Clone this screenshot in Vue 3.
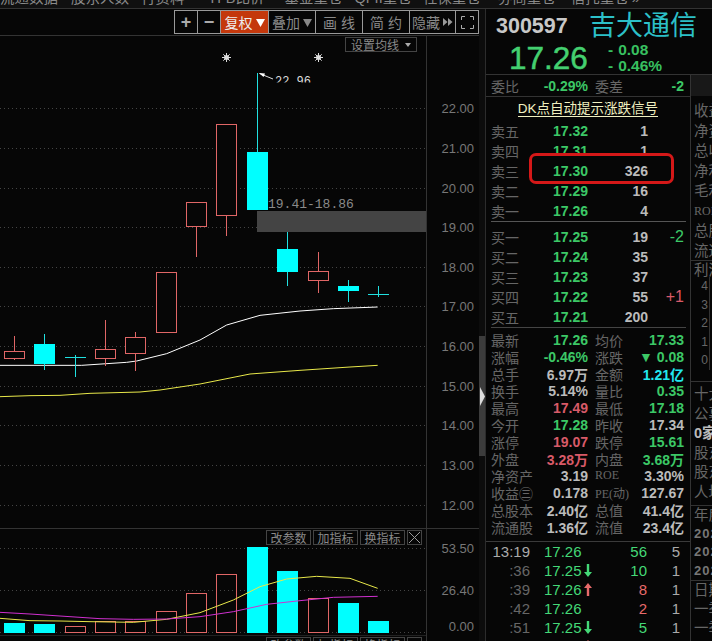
<script setup>
const menuItems = [
  { text: '流通数据', gap: 0 },
  { text: '股东人数', gap: 13 },
  { text: '行资料', gap: 12 },
  { text: 'H·B比价', gap: 26 },
  { text: '基金重仓', gap: 20 },
  { text: 'QFII重仓', gap: 12 },
  { text: '社保重仓', gap: 11 },
  { text: '券商重仓', gap: 17 },
  { text: '信托重仓', gap: 15 },
  { text: '»', gap: 3 },
];

const tools = [
  { text: '+', width: 23, cls: 'sym' },
  { text: '−', width: 23, cls: 'sym' },
  { text: '复权', width: 48, cls: 'active', tri: '#fff' },
  { text: '叠加', width: 47, tri: '#888' },
  { text: '画 线', width: 47 },
  { text: '简 约', width: 47 },
  { text: '隐藏', width: 46, more: true },
];

const grid = [
  [22, 108.5], [21, 148.5], [20, 188.5], [19, 227.5], [18, 267.5], [17, 306.5],
  [16, 346.5], [15, 386.5], [14, 425.5], [13, 465.5], [12, 505.5],
];

// x = left of body, t/b = body, h/l = wick
const candles = [
  { x: 4, t: 351, b: 358, h: 336, l: 360, c: 'r' },
  { x: 34, t: 344, b: 364, h: 334, l: 370, c: 'g' },
  { x: 65, t: 357, b: 357, h: 355, l: 377, c: 'g' },
  { x: 95, t: 349, b: 358, h: 320, l: 366, c: 'r' },
  { x: 125, t: 337, b: 353, h: 332, l: 371, c: 'r' },
  { x: 156, t: 272, b: 332, h: 272, l: 332, c: 'r' },
  { x: 186, t: 202, b: 226, h: 202, l: 257, c: 'r' },
  { x: 216, t: 124, b: 215, h: 124, l: 236, c: 'r' },
  { x: 247, t: 152, b: 210, h: 73, l: 210, c: 'g' },
  { x: 277, t: 249, b: 272, h: 232, l: 286, c: 'g' },
  { x: 308, t: 271, b: 280, h: 252, l: 293, c: 'r' },
  { x: 338, t: 286, b: 291, h: 280, l: 302, c: 'g' },
  { x: 368, t: 294, b: 294, h: 286, l: 297, c: 'g' },
];

const volBars = [
  { x: 4, t: 623, c: 'g' }, { x: 34, t: 624, c: 'g' }, { x: 65, t: 626, c: 'r' },
  { x: 95, t: 621, c: 'r' }, { x: 125, t: 621, c: 'r' }, { x: 156, t: 611, c: 'r' },
  { x: 186, t: 593, c: 'r' }, { x: 216, t: 574, c: 'r' }, { x: 247, t: 547, c: 'g' },
  { x: 277, t: 571, c: 'g' }, { x: 308, t: 598, c: 'r' }, { x: 338, t: 603, c: 'g' },
  { x: 368, t: 621, c: 'g' },
];

// traced from 3x crops
const line = (pts, oy) => pts.map(([x, y]) => `${x / 3},${oy + y / 3}`).join(' ');

const maWhite = line([[0, 526], [245, 526], [380, 517], [410, 513], [500, 491], [600, 450], [680, 405], [780, 376], [900, 363], [1000, 356], [1133, 351]], 190);
const maYellow = line([[0, 620], [90, 617], [180, 616], [270, 610], [420, 606], [480, 600], [600, 582], [750, 552], [900, 541], [1050, 531], [1133, 526]], 190);
const volYellow = line([[0, 295], [90, 302], [180, 303], [270, 305], [400, 307], [500, 298], [600, 278], [700, 240], [780, 200], [860, 177], [950, 169], [1050, 175], [1133, 205]], 520);
const volPurple = line([[0, 277], [90, 282], [180, 288], [300, 296], [400, 298], [500, 297], [600, 290], [700, 275], [800, 253], [900, 242], [1000, 232], [1133, 229]], 520);

const sells = [
  { name: '卖五', price: '17.32', qty: '1' },
  { name: '卖四', price: '17.31', qty: '1' },
  { name: '卖三', price: '17.30', qty: '326', top: true },
  { name: '卖二', price: '17.29', qty: '16' },
  { name: '卖一', price: '17.26', qty: '4' },
];

const buys = [
  { name: '买一', price: '17.25', qty: '19', diff: '-2', cls: 'green' },
  { name: '买二', price: '17.24', qty: '35' },
  { name: '买三', price: '17.23', qty: '37' },
  { name: '买四', price: '17.22', qty: '55', diff: '+1', cls: 'red' },
  { name: '买五', price: '17.21', qty: '200' },
];

const stats = [
  ['最新', '17.26', 'green', '均价', '17.33', 'green'],
  ['涨幅', '-0.46%', 'green', '涨跌', '▼ 0.08', 'green'],
  ['总手', '6.97万', 'white', '金额', '1.21亿', 'cyan'],
  ['换手', '5.14%', 'white', '量比', '0.35', 'green'],
  ['最高', '17.49', 'red', '最低', '17.18', 'green'],
  ['今开', '17.28', 'green', '昨收', '17.34', 'white'],
  ['涨停', '19.07', 'red', '跌停', '15.61', 'green'],
  ['外盘', '3.28万', 'red', '内盘', '3.68万', 'green'],
  ['净资产', '3.19', 'white', 'ROE', '3.30%', 'white'],
  ['收益㊂', '0.178', 'white', 'PE(动)', '127.67', 'white'],
  ['总股本', '2.40亿', 'white', '总值', '41.4亿', 'white'],
  ['流通股', '1.36亿', 'white', '流值', '23.4亿', 'white'],
];

const ticks = [
  { time: '13:19', main: true, price: '17.26', vol: '56', volCls: 'green', n: '5' },
  { time: ':36', price: '17.25', arrow: 'down', vol: '10', volCls: 'green', n: '1' },
  { time: ':39', price: '17.26', arrow: 'up', vol: '8', volCls: 'red', n: '1' },
  { time: ':42', price: '17.26', vol: '2', volCls: 'red', n: '1' },
  { time: ':51', price: '17.25', arrow: 'down', vol: '5', volCls: 'green', n: '1' },
  { time: ':54', price: '17.26', arrow: 'up', vol: '3', volCls: 'red', n: '1' },
];

const finA = ['收益', '净资', '总收', '净利', '毛利', 'ROE', '总股', '流通'];
const finB = ['十大', '公募', '0家', '股东', '股东', '人均'];
const finC = ['年度', '2023', '2022', '2021'];
const finD = ['日期', '一季', '一季'];

const isLatin = (s) => /^[A-Z]/.test(s);
</script>

<template>
  <div class="screen">
    <div class="menu">
      <div class="menu-inner">
        <span v-for="m in menuItems" :key="m.text" :style="{ marginLeft: m.gap + 'px' }">{{ m.text }}</span>
      </div>
    </div>

    <div class="body">
      <div class="charts">
        <div class="toolbar">
          <div class="tools">
            <div
              v-for="t in tools"
              :key="t.text"
              class="tool"
              :class="t.cls"
              :style="{ width: t.width + 'px' }"
            >
              <span>{{ t.text }}</span>
              <svg v-if="t.tri" width="9" height="9" viewBox="0 0 9 9"><polygon points="0,1 9,1 4.5,9" :fill="t.tri" /></svg>
              <svg v-if="t.more" width="10" height="8" viewBox="0 0 10 8"><polygon points="0,0 4.5,4 0,8" fill="#999" /><polygon points="5,0 9.5,4 5,8" fill="#999" /></svg>
            </div>
            <div class="tool" style="width: 23px">
              <svg width="13" height="13" viewBox="0 0 13 13" fill="none" stroke="#aaa">
                <path d="M.5 4V.5H4M9 .5h3.5V4M12.5 9v3.5H9M4 12.5H.5V9" />
              </svg>
            </div>
          </div>
        </div>

        <div class="price-chart">
          <svg width="479" height="492" viewBox="0 36 479 492">
            <defs>
              <clipPath id="hiClip"><rect x="270" y="70" width="60" height="12.5" /></clipPath>
            </defs>
            <g v-for="g in grid" :key="g[0]">
              <line x1="0" x2="426" :y1="g[1]" :y2="g[1]" class="dots" />
              <text x="474" :y="g[1] + 4.5" text-anchor="end" class="axis">{{ g[0] }}.00</text>
            </g>
            <line x1="426.5" x2="426.5" y1="36" y2="528" stroke="#333" />

            <rect x="257" y="211" width="169" height="21" fill="#444" />
            <text x="268" y="208" class="zone">19.41-18.86</text>

            <polyline :points="maWhite" fill="none" stroke="#fff" />
            <polyline :points="maYellow" fill="none" stroke="#e8e84a" />

            <g v-for="(c, i) in candles" :key="i">
              <line
                :x1="c.x + 10.5"
                :x2="c.x + 10.5"
                :y1="c.h"
                :y2="c.l"
                :stroke="c.c === 'r' ? '#e06666' : '#20e0e0'"
              />
              <line
                v-if="c.t === c.b"
                :x1="c.x"
                :x2="c.x + 21"
                :y1="c.t + 0.5"
                :y2="c.t + 0.5"
                stroke="#20e0e0"
              />
              <rect
                v-else-if="c.c === 'g'"
                :x="c.x"
                :y="c.t"
                width="21"
                :height="c.b - c.t"
                fill="#00ffff"
              />
              <rect
                v-else
                :x="c.x + 0.5"
                :y="c.t + 0.5"
                width="20"
                :height="c.b - c.t"
                fill="#060606"
                stroke="#e06666"
              />
            </g>

            <g v-for="sx in [226.5, 318.5]" :key="sx" stroke="#ddd" stroke-width="1">
              <circle :cx="sx" cy="57.5" r="2.5" fill="#ddd" stroke="none" />
              <line :x1="sx - 4.5" :x2="sx + 4.5" y1="57.5" y2="57.5" />
              <line :x1="sx" :x2="sx" y1="53" y2="62" />
              <line :x1="sx - 3.2" :x2="sx + 3.2" y1="54.3" y2="60.7" />
              <line :x1="sx - 3.2" :x2="sx + 3.2" y1="60.7" y2="54.3" />
            </g>

            <polyline points="259.5,73.5 273,79" fill="none" stroke="#ddd" />
            <polygon points="259,73 265,73.5 263.5,77" fill="#fff" />
            <text x="275" y="85" class="high" clip-path="url(#hiClip)">22.96</text>
          </svg>
          <div class="ma-btn">设置均线<svg width="6" height="4" viewBox="0 0 6 4"><polygon points="0,0 6,0 3,4" fill="#aaa" /></svg></div>
        </div>

        <div class="vol-chart">
          <svg width="479" height="113" viewBox="0 528 479 113">
            <line x1="0" x2="479" y1="528.5" y2="528.5" stroke="#333" />
            <line x1="0" x2="426" y1="548.5" y2="548.5" class="dots" />
            <line x1="0" x2="426" y1="590.5" y2="590.5" class="dots" />
            <line x1="0" x2="426" y1="632.5" y2="632.5" class="dots" />
            <line x1="426.5" x2="426.5" y1="528" y2="641" stroke="#333" />
            <text x="474" y="553" text-anchor="end" class="axis">53.50</text>
            <text x="474" y="595" text-anchor="end" class="axis">26.40</text>
            <text x="474" y="631" text-anchor="end" class="axis">0.00</text>
            <template v-for="(b, i) in volBars" :key="i">
              <rect v-if="b.c === 'g'" :x="b.x" :y="b.t" width="21" :height="633 - b.t" fill="#00ffff" />
              <rect v-else :x="b.x + 0.5" :y="b.t + 0.5" width="20" :height="632 - b.t" fill="none" stroke="#e06666" />
            </template>
            <polyline :points="volYellow" fill="none" stroke="#e8e84a" />
            <polyline :points="volPurple" fill="none" stroke="#d030d0" />
            <line x1="0" x2="426" y1="635.5" y2="635.5" stroke="#222" />
          </svg>
          <div class="ind-btns">
            <span class="ind">改参数</span>
            <span class="ind">加指标</span>
            <span class="ind">换指标</span>
            <span class="ind close">
              <svg width="11" height="11" viewBox="0 0 11 11" stroke="#999"><path d="M0 0l11 11M11 0L0 11" /></svg>
            </span>
          </div>
          <div class="ind-btns next">
            <span class="ind">改参数</span>
            <span class="ind">加指标</span>
            <span class="ind">换指标</span>
            <span class="ind close"></span>
          </div>
        </div>
      </div>

      <div class="splitter">
        <div class="thumb">
          <svg width="5" height="19" viewBox="0 0 5 19"><polygon points="0,0 0,19 5,9.5" fill="#ddd" /></svg>
        </div>
      </div>

      <div class="side">
        <div class="head">
          <div class="head-top">
            <span class="code">300597</span>
            <span class="stock-name">吉大通信</span>
          </div>
          <div class="head-bottom">
            <span class="big-price">17.26</span>
            <div class="change">
              <div><i>-</i>0.08</div>
              <div><i>-</i>0.46%</div>
            </div>
          </div>
        </div>

        <div class="lower">
          <div class="quote">
            <div class="ratio">
              <div class="pair wide"><span class="lb">委比</span><span class="num green">-0.29%</span></div>
              <div class="pair"><span class="lb">委差</span><span class="num green">-2</span></div>
            </div>
            <div class="signal"><span>DK点自动提示涨跌信号</span></div>

            <div class="book">
              <div v-for="s in sells" :key="s.name" class="book-row" :class="{ over: s.top }">
                <span class="lb b-name">{{ s.name }}</span>
                <span class="num green b-price">{{ s.price }}</span>
                <span class="num white b-qty">{{ s.qty }}</span>
              </div>
              <div class="red-box"></div>
            </div>

            <div class="book buy">
              <div v-for="b in buys" :key="b.name" class="book-row">
                <span class="lb b-name">{{ b.name }}</span>
                <span class="num green b-price">{{ b.price }}</span>
                <span class="num white b-qty">{{ b.qty }}</span>
                <span v-if="b.diff" class="b-diff" :class="b.cls">{{ b.diff }}</span>
              </div>
            </div>

            <div class="stats">
              <div v-for="r in stats" :key="r[0]" class="stat-row">
                <div class="pair wide">
                  <span class="lb">{{ r[0] }}</span>
                  <span class="num" :class="r[2]">{{ r[1] }}</span>
                </div>
                <div class="pair">
                  <span class="lb" :class="{ latin: isLatin(r[3]) }">{{ r[3] }}</span>
                  <span class="num" :class="r[5]">{{ r[4] }}</span>
                </div>
              </div>
            </div>

            <div class="ticks">
              <div v-for="t in ticks" :key="t.time" class="tick-row">
                <span class="t-time" :class="{ main: t.main }">{{ t.time }}</span>
                <span class="t-price green">{{ t.price }}
                  <svg v-if="t.arrow === 'down'" width="8" height="13" viewBox="0 0 8 13"><path d="M2.8 0h2.4v8H8L4 13 0 8h2.8z" fill="#44d877" /></svg>
                  <svg v-if="t.arrow === 'up'" width="8" height="13" viewBox="0 0 8 13"><path d="M2.8 13h2.4V5H8L4 0 0 5h2.8z" fill="#e86a6a" /></svg>
                </span>
                <span class="t-vol" :class="t.volCls">{{ t.vol }}</span>
                <span class="t-n">{{ t.n }}</span>
              </div>
            </div>
          </div>

          <div class="fin">
            <div class="fin-cap"></div>
            <div class="fin-block a">
              <div v-for="(x, i) in finA" :key="i" class="fin-row" :class="{ latin: isLatin(x) }">{{ x }}</div>
            </div>
            <div class="fin-block p">
              <div class="fin-row">利润</div>
              <div class="mini">
                <span v-for="n in [4, 3, 2, 1, 0]" :key="n">{{ n }}</span>
              </div>
            </div>
            <div class="fin-block b">
              <div v-for="(x, i) in finB" :key="i" class="fin-row" :class="{ lit: i === 2 }">{{ x }}</div>
            </div>
            <div class="fin-block c">
              <div v-for="(x, i) in finC" :key="i" class="fin-row" :class="{ yr: i > 0 }">{{ x }}</div>
            </div>
            <div class="fin-block d">
              <div v-for="(x, i) in finD" :key="i" class="fin-row">{{ x }}</div>
            </div>
          </div>
        </div>
      </div>
    </div>
  </div>
</template>

<style scoped>
.screen {
  width: 712px;
  height: 641px;
  overflow: hidden;
  background: #060606;
  display: flex;
  flex-direction: column;
  font-family: "Liberation Sans", "Noto Sans CJK SC", sans-serif;
}

.menu {
  height: 9px;
  flex-shrink: 0;
  overflow: hidden;
  background: #101010;
  border-bottom: 1px solid #333;
  box-sizing: border-box;
}
.menu-inner {
  display: flex;
  margin-top: -12px;
  line-height: 20px;
  font-size: 14.5px;
  color: #8a8a8a;
  white-space: nowrap;
}

.body {
  display: flex;
  height: 632px;
}

.charts {
  width: 479px;
  flex-shrink: 0;
}

.toolbar {
  height: 27px;
  box-sizing: border-box;
  border-bottom: 1px solid #333;
  display: flex;
  justify-content: flex-end;
  padding-top: 1px;
}
.tools {
  display: flex;
  height: 24px;
  border: 1px solid #999;
  border-left: 0;
  box-sizing: border-box;
}
.tool {
  box-sizing: border-box;
  border-left: 1px solid #999;
  display: flex;
  align-items: center;
  justify-content: center;
  gap: 3px;
  font-size: 14px;
  color: #8a8a8a;
  white-space: nowrap;
}
.tool.sym {
  font-size: 18px;
  font-weight: bold;
  color: #aaa;
}
.tool.active {
  background: #c4380c;
  color: #eee;
}

.price-chart {
  position: relative;
  height: 492px;
}
.price-chart svg,
.vol-chart > svg {
  display: block;
}
.dots {
  stroke: #444;
  stroke-dasharray: 1 3;
}
.axis {
  font-size: 13px;
  fill: #777;
}
.zone {
  font-family: "Liberation Mono", monospace;
  font-size: 13px;
  fill: #8a8a8a;
}
.high {
  font-family: "Liberation Mono", monospace;
  font-size: 12px;
  fill: #ddd;
}
.ma-btn {
  position: absolute;
  left: 345px;
  top: 1px;
  width: 72px;
  height: 15px;
  box-sizing: border-box;
  border: 1px solid #444;
  display: flex;
  align-items: center;
  justify-content: center;
  gap: 6px;
  font-size: 12px;
  color: #8a8a8a;
}

.vol-chart {
  position: relative;
  height: 113px;
}
.ind-btns {
  position: absolute;
  left: 266px;
  top: 2px;
  display: flex;
  gap: 2px;
}
.ind-btns.next {
  top: 109px;
}
.ind {
  width: 45px;
  height: 15px;
  box-sizing: border-box;
  border: 1px solid #444;
  display: flex;
  align-items: center;
  justify-content: center;
  font-size: 12px;
  color: #8a8a8a;
}
.ind.close {
  width: 15px;
}

.splitter {
  width: 6px;
  flex-shrink: 0;
  background: #0c0c0c;
  padding-top: 327px;
  box-sizing: border-box;
}
.thumb {
  height: 120px;
  background: #3c3c3c;
  display: flex;
  align-items: center;
  justify-content: flex-start;
  padding-left: 1px;
}

.side {
  flex: 1;
  min-width: 0;
  border-left: 1px solid #2c2c2c;
  display: flex;
  flex-direction: column;
}

.head {
  height: 66px;
  box-sizing: border-box;
  border-bottom: 1px solid #333;
  overflow: hidden;
}
.head-top {
  display: flex;
  align-items: center;
  height: 32px;
  padding-left: 10px;
  padding-top: 1px;
}
.code {
  font-size: 21.5px;
  font-weight: bold;
  color: #c8c8c8;
  width: 93px;
}
.stock-name {
  font-size: 27px;
  line-height: 32px;
  color: #2cc0c8;
  white-space: nowrap;
}
.head-bottom {
  display: flex;
  align-items: center;
  padding-left: 23px;
}
.big-price {
  font-size: 31.5px;
  line-height: 32px;
  color: #44d070;
  width: 99px;
  -webkit-text-stroke: 0.5px #44d070;
}
.change {
  font-size: 15.5px;
  font-weight: bold;
  line-height: 16px;
  color: #38c060;
}
.change i {
  font-style: normal;
  margin-right: 5px;
}

.lower {
  display: flex;
  flex: 1;
  min-height: 0;
}

.quote {
  width: 205px;
  flex-shrink: 0;
  border-right: 1px solid #333;
  box-sizing: border-box;
}

.lb {
  font-size: 14px;
  color: #666;
  white-space: nowrap;
}
.lb.latin {
  font-family: "Liberation Serif", "Noto Sans CJK SC", serif;
  font-size: 12px;
}
.num {
  font-size: 14px;
  font-weight: bold;
  white-space: nowrap;
}
.green { color: #3cc866; }
.red { color: #d85a68; }
.white { color: #bbb; }
.cyan { color: #22e8f0; }

.ratio {
  height: 22px;
  box-sizing: border-box;
  border-bottom: 1px solid #333;
  display: flex;
  align-items: center;
  padding-left: 5px;
  gap: 7px;
}
.pair {
  width: 89px;
  display: flex;
  align-items: center;
  justify-content: space-between;
}
.pair.wide {
  width: 97px;
}

.signal {
  height: 24px;
  display: flex;
  align-items: center;
  justify-content: center;
}
.signal span {
  font-size: 13.5px;
  line-height: 15px;
  color: #f0f0c0;
  border-bottom: 1px solid #f0f0c0;
  white-space: nowrap;
}

.book {
  position: relative;
  padding-bottom: 2px;
}
.book::after {
  content: "";
  display: block;
  margin: 0 4px 0 5px;
  border-bottom: 1px solid #555;
}
.book.buy {
  padding-top: 3px;
  padding-bottom: 0;
}
.book.buy::after {
  margin-top: 0;
  border-bottom-color: #444;
}
.book-row {
  display: flex;
  align-items: center;
  height: 20px;
  padding-left: 5px;
}
.book-row.over {
  position: relative;
  z-index: 2;
}
.b-name {
  width: 62px;
}
.b-price {
  width: 45px;
}
.b-qty {
  width: 50px;
  text-align: right;
}
.b-diff {
  width: 36px;
  text-align: right;
  font-size: 16px;
}
.red-box {
  position: absolute;
  left: 43px;
  top: 32px;
  width: 145px;
  height: 31px;
  box-sizing: border-box;
  border: 3px solid #d41818;
  border-radius: 7px;
  background: #060606;
  z-index: 1;
}

.stats {
  padding-top: 3px;
  height: 214px;
  box-sizing: border-box;
  border-bottom: 1px solid #3a3a3a;
}
.stat-row {
  display: flex;
  height: 17px;
  padding-left: 5px;
  gap: 7px;
}

.tick-row {
  display: flex;
  align-items: center;
  height: 19px;
  padding-left: 5px;
  font-size: 15px;
}
.t-time {
  width: 39px;
  text-align: right;
  color: #666;
}
.t-time.main {
  color: #aaa;
}
.t-price {
  margin-left: 14px;
  width: 52px;
  color: #44d877;
  display: flex;
  align-items: center;
  gap: 2px;
}
.t-vol {
  width: 51px;
  text-align: right;
}
.t-vol.green { color: #44d877; }
.t-vol.red { color: #e86a6a; }
.t-n {
  width: 33px;
  text-align: right;
  color: #aaa;
}

.fin {
  flex: 1;
  min-width: 0;
  overflow: hidden;
  font-size: 14.5px;
  color: #666;
}
.fin-cap {
  height: 21px;
  background: #181818;
}
.fin-block {
  border-bottom: 1px solid #333;
  box-sizing: border-box;
  padding-left: 3px;
}
.fin-block.a {
  height: 165px;
  padding-top: 5px;
}
.fin-block.a .fin-row {
  height: 20px;
  line-height: 20px;
}
.fin-block.a .latin {
  font-family: "Liberation Serif", serif;
  font-size: 12px;
}
.fin-block.p {
  height: 121px;
}
.fin-block.p .fin-row {
  height: 16px;
  line-height: 18px;
}
.mini {
  width: 16px;
  display: flex;
  flex-direction: column;
  border-right: 1px solid #333;
  font-size: 12px;
  text-align: right;
  padding-right: 1px;
  box-sizing: border-box;
  margin-left: 0;
}
.mini span {
  height: 18.5px;
  line-height: 18.5px;
}
.fin-block.b {
  height: 124px;
  padding-top: 3px;
}
.fin-block.b .fin-row {
  height: 19.5px;
  line-height: 19.5px;
}
.fin-block.b .lit {
  color: #bbb;
  font-weight: bold;
}
.fin-block.c {
  height: 75px;
}
.fin-block.c .fin-row {
  height: 18.5px;
  line-height: 18.5px;
}
.fin-block.c .yr {
  font-weight: bold;
  font-size: 13px;
  color: #777;
  letter-spacing: 1px;
}
.fin-block.d {
  border-bottom: 0;
}
.fin-block.d .fin-row {
  height: 19px;
  line-height: 19px;
}
.fin-row {
  white-space: nowrap;
}
</style>

<style>
html, body {
  margin: 0;
  background: #060606;
}
</style>
